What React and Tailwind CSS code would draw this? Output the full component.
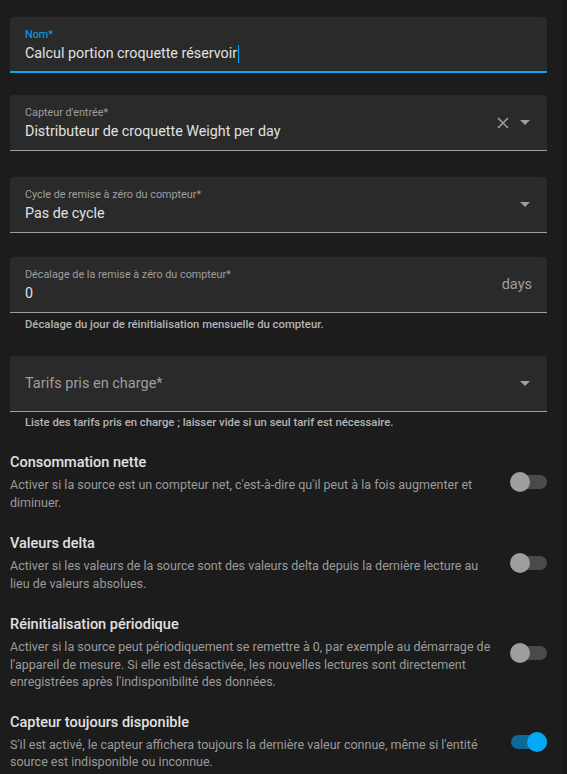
import React from 'react';

const Caret = () => (
  <svg width="10" height="5" viewBox="0 0 10 5" className="shrink-0">
    <path d="M0 0 L10 0 L5 5 Z" fill="#9e9e9e" />
  </svg>
);

const Cross = () => (
  <svg width="12" height="12" viewBox="0 0 12 12" className="shrink-0">
    <path d="M1 1 L11 11 M11 1 L1 11" stroke="#9e9e9e" strokeWidth="1.6" />
  </svg>
);

const Field = ({ label, value, focused, right, className = '' }) => (
  <div
    className={`h-[56px] rounded-t bg-[#2a2a2a] flex items-start pl-[15px] pr-[17px] ${
      focused ? 'border-b-2 border-[#03a9f4]' : 'border-b border-[#9e9e9e]'
    } ${className}`}
  >
    <div className="flex-1 flex flex-col pt-[11px]">
      <span className={`text-[10.8px] leading-[14px] ${focused ? 'text-[#03a9f4]' : 'text-[#9e9e9e]'}`}>{label}</span>
      <span className="text-[14.3px] leading-[20px] mt-[1px] text-[#e1e1e1]">
        {value}
        {focused && <span className="inline-block w-px h-[18px] bg-[#03a9f4] align-middle ml-px" />}
      </span>
    </div>
    <div className="self-center flex items-center gap-[11px]">{right}</div>
  </div>
);

const Toggle = ({ on }) => (
  <div className="relative w-[37px] h-[20px] shrink-0 flex items-center">
    <div className={`ml-[1px] w-[36px] h-[14px] rounded-full ${on ? 'bg-[#0b6a97]' : 'bg-[#4a4a4a]'}`} />
    <div
      className={`absolute top-0 w-[20px] h-[20px] rounded-full ${
        on ? 'left-[17px] bg-[#03a9f4]' : 'left-0 bg-[#9e9e9e]'
      }`}
    />
  </div>
);

const Row = ({ title, desc, on, className = '' }) => (
  <div className={`flex items-center gap-[14px] ${className}`}>
    <div className="flex-1">
      <div className="text-[14.5px] leading-[20px] font-medium text-[#e1e1e1]">{title}</div>
      <div className="text-[12.5px] leading-[17.5px] mt-[3px] text-[#9b9b9b]">{desc}</div>
    </div>
    <Toggle on={on} />
  </div>
);

export default function App() {
  return (
    <div className="min-h-screen bg-[#1c1c1c] flex" style={{ fontFamily: 'Roboto, "Noto Sans", sans-serif' }}>
      <div className="w-[562px] pt-[17px] pl-[10px] pr-[15px] pb-[4px]">
        <Field label="Nom*" value="Calcul portion croquette réservoir" focused />
        <Field
          className="mt-[22px]"
          label="Capteur d'entrée*"
          value="Distributeur de croquette Weight per day"
          right={
            <>
              <Cross />
              <Caret />
            </>
          }
        />
        <Field className="mt-[26px]" label="Cycle de remise à zéro du compteur*" value="Pas de cycle" right={<Caret />} />
        <Field
          className="mt-[24px]"
          label="Décalage de la remise à zéro du compteur*"
          value="0"
          right={<span className="text-[14.5px] text-[#9e9e9e] -mr-[2px]">days</span>}
        />
        <div className="px-[15px] pt-[5px] text-[11.3px] leading-[14px] font-medium text-[#b4b4b4]">
          Décalage du jour de réinitialisation mensuelle du compteur.
        </div>
        <div className="mt-[24px] h-[56px] rounded-t bg-[#2a2a2a] border-b border-[#9e9e9e] flex items-center pl-[15px] pr-[17px]">
          <span className="flex-1 text-[14.5px] text-[#9e9e9e]">Tarifs pris en charge*</span>
          <Caret />
        </div>
        <div className="px-[15px] pt-[4px] text-[11.3px] leading-[14px] font-medium text-[#b4b4b4]">
          Liste des tarifs pris en charge ; laisser vide si un seul tarif est nécessaire.
        </div>
        <Row
          className="mt-[23px]"
          title="Consommation nette"
          desc="Activer si la source est un compteur net, c'est-à-dire qu'il peut à la fois augmenter et diminuer."
        />
        <Row
          className="mt-[23px]"
          title="Valeurs delta"
          desc="Activer si les valeurs de la source sont des valeurs delta depuis la dernière lecture au lieu de valeurs absolues."
        />
        <Row
          className="mt-[23px]"
          title="Réinitialisation périodique"
          desc="Activer si la source peut périodiquement se remettre à 0, par exemple au démarrage de l'appareil de mesure. Si elle est désactivée, les nouvelles lectures sont directement enregistrées après l'indisponibilité des données."
        />
        <Row
          className="mt-[22px]"
          title="Capteur toujours disponible"
          desc="S'il est activé, le capteur affichera toujours la dernière valeur connue, même si l'entité source est indisponible ou inconnue."
          on
        />
      </div>
      <div className="flex-1 bg-[#181818]" />
    </div>
  );
}
